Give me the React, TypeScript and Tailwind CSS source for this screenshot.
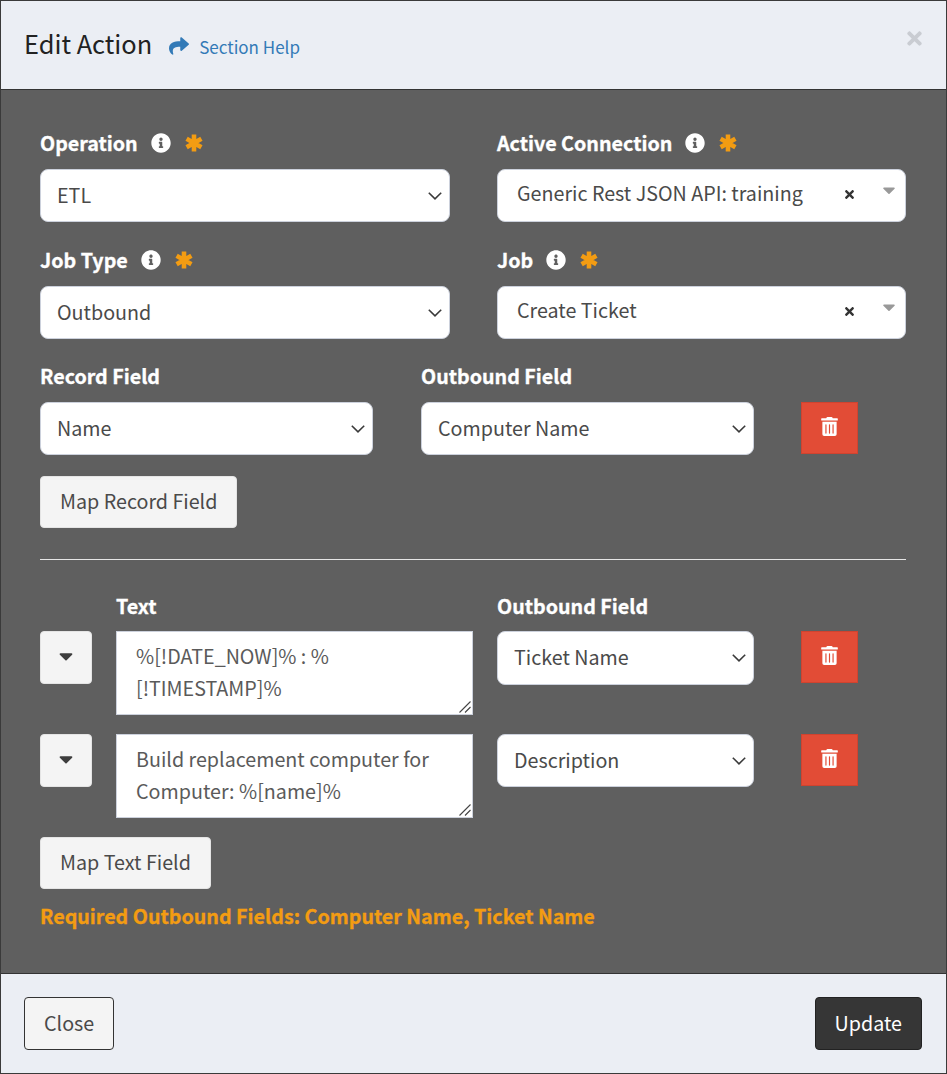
import React from 'react';
import { FaCaretDown, FaInfoCircle, FaShare, FaTimes, FaTrashAlt } from 'react-icons/fa';

function RequiredMark() {
  return (
    <svg viewBox="0 0 18 18" className="w-[18px] h-[18px] ml-[14px] text-[#f39c12]" stroke="currentColor" strokeWidth="4.6">
      <path d="M9 0.5V17.5M1.6 4.75L16.4 13.25M16.4 4.75L1.6 13.25" />
    </svg>
  );
}

function FieldLabel({ text, required }: { text: string; required?: boolean }) {
  return (
    <div className="flex items-center h-[31px] pb-[2px] mb-[10px] text-[19.7px] font-bold text-white [-webkit-text-stroke:0.3px]">
      <span>{text}</span>
      {required && (
        <>
          <FaInfoCircle className="ml-[13px] text-[20px]" />
          <RequiredMark />
        </>
      )}
    </div>
  );
}

function NativeSelect({ value, tall }: { value: string; tall?: boolean }) {
  return (
    <div className={tall ? 'relative h-[54px]' : 'relative h-[53px]'}>
      <select
        className="block w-full h-full pl-4 pr-8 pb-[2px] appearance-none bg-white border border-[#ccd1dc] rounded-lg text-[19.7px] text-[#4a4a4a] outline-none"
        defaultValue={value}
      >
        <option>{value}</option>
      </select>
      <svg
        viewBox="0 0 14 8"
        className="absolute right-[8px] top-[23px] w-[14px] h-[8px] text-[#3a3a3a] pointer-events-none"
        fill="none"
        stroke="currentColor"
        strokeWidth="1.6"
      >
        <path d="M0.8 0.8L7 6.8L13.2 0.8" />
      </svg>
    </div>
  );
}

function ClearableSelect({ value }: { value: string }) {
  return (
    <div className="flex items-start h-[53px] pl-[19px] pr-[6px] bg-white border border-[#ccd1dc] rounded-lg text-[19.7px] text-[#4a4a4a]">
      <span className="flex-1 leading-[46px]">{value}</span>
      <FaTimes className="mt-[18px] text-[13px] text-[#333]" />
      <FaCaretDown className="ml-[23px] mt-[10px] text-[20px] text-[#999]" />
    </div>
  );
}

function DeleteButton() {
  return (
    <button className="flex items-center justify-center w-[57px] h-[52px] bg-[#e24c36] border border-[#d0432f] text-white">
      <FaTrashAlt className="text-[19px] -mt-[3px]" />
    </button>
  );
}

function GrayButton({ text }: { text: string }) {
  return (
    <button className="block h-[52px] px-[19px] pb-[2px] bg-[#f4f4f4] border border-[#e4e4e4] rounded text-[19.7px] text-[#4a4a4a]">
      {text}
    </button>
  );
}

function TextMapRow({ text, field, tall }: { text: string; field: string; tall?: boolean }) {
  return (
    <div className="grid grid-cols-[52px_357px_257px_57px] gap-x-6 items-start">
      <button className="flex items-center justify-center h-[53px] bg-[#f4f4f4] border border-[#e4e4e4] rounded text-[#3d3d3d]">
        <FaCaretDown className="text-[22px] -mt-[3px]" />
      </button>
      <div className="relative">
        <textarea
          className="block w-[357px] h-[84px] pl-[19px] pr-4 pt-2 resize-none bg-white border border-[#ccd1dc] text-[19.7px] leading-[32px] text-[#5a5a5a] outline-none"
          defaultValue={text}
        />
        <svg
          viewBox="0 0 12 12"
          className="absolute right-[2px] bottom-[2px] w-[12px] h-[12px] text-[#444] pointer-events-none"
          stroke="currentColor"
          strokeWidth="1.1"
        >
          <path d="M0.5 11.5L11.5 0.5M6 11.5L11.5 6" />
        </svg>
      </div>
      <NativeSelect value={field} tall={tall} />
      <div className="ml-[23px]">
        <DeleteButton />
      </div>
    </div>
  );
}

export default function App() {
  return (
    <div
      className="flex flex-col h-[1074px] border border-[#3a3a3a] bg-[#5f5f5f]"
      style={{ fontFamily: '"Noto Sans CJK SC", "Noto Sans", sans-serif' }}
    >
      {/* Header */}
      <header className="flex items-start h-[89px] bg-[#ebeef4] border-b border-[#333] pl-[23px] pr-6">
        <h1 className="mt-[22px] text-[25.4px] leading-[40px] text-[#222]">Edit Action</h1>
        <a className="flex items-center ml-[17px] mt-[31px] text-[17px] leading-[30px] text-[#337ab7]">
          <FaShare className="text-[20px] mr-[10px] -mt-[3px]" />
          Section Help
        </a>
        <FaTimes className="ml-auto mt-[27px] -mr-[3px] text-[21px] text-[#c9ccd2]" />
      </header>

      {/* Body */}
      <main className="flex-1 pt-[38px] pl-[39px] pr-[40px]">
        <div className="grid grid-cols-[410px_409px] gap-x-[47px]">
          <div>
            <FieldLabel text="Operation" required />
            <NativeSelect value="ETL" />
          </div>
          <div>
            <FieldLabel text="Active Connection" required />
            <ClearableSelect value="Generic Rest JSON API: training" />
          </div>
        </div>

        <div className="grid grid-cols-[410px_409px] gap-x-[47px] mt-[23px]">
          <div>
            <FieldLabel text="Job Type" required />
            <NativeSelect value="Outbound" />
          </div>
          <div>
            <FieldLabel text="Job" required />
            <ClearableSelect value="Create Ticket" />
          </div>
        </div>

        <div className="grid grid-cols-[333px_333px_57px] gap-x-[48px] mt-[22px]">
          <div>
            <FieldLabel text="Record Field" />
            <NativeSelect value="Name" />
          </div>
          <div>
            <FieldLabel text="Outbound Field" />
            <NativeSelect value="Computer Name" />
          </div>
          <div className="pt-[41px] -ml-px">
            <DeleteButton />
          </div>
        </div>

        <div className="mt-[21px]">
          <GrayButton text="Map Record Field" />
        </div>

        <hr className="mt-[31px] border-t border-[#e6e6e6]" />

        <div className="grid grid-cols-[357px_257px] gap-x-6 ml-[76px] mt-[32px]">
          <div className="flex items-center h-[30px] pb-[2px] mb-[9px] text-[19.7px] font-bold text-white [-webkit-text-stroke:0.3px]">Text</div>
          <div className="flex items-center h-[30px] pb-[2px] mb-[9px] text-[19.7px] font-bold text-white [-webkit-text-stroke:0.3px]">Outbound Field</div>
        </div>

        <div className="flex flex-col gap-y-[19px]">
          <TextMapRow text="%[!DATE_NOW]% : %[!TIMESTAMP]%" field="Ticket Name" tall />
          <TextMapRow text="Build replacement computer for Computer: %[name]%" field="Description" />
        </div>

        <div className="mt-[19px]">
          <GrayButton text="Map Text Field" />
        </div>

        <p className="mt-[12px] text-[19.7px] leading-[30px] font-bold text-[#f39c12] [-webkit-text-stroke:0.3px]">
          Required Outbound Fields: Computer Name, Ticket Name
        </p>
      </main>

      {/* Footer */}
      <footer className="flex items-center justify-between h-[100px] bg-[#ebeef4] border-t border-[#333] pl-[23px] pr-[24px]">
        <button className="h-[53px] px-[19px] pb-[2px] bg-[#f4f4f4] border border-[#333] rounded text-[19.7px] text-[#4a4a4a]">
          Close
        </button>
        <button className="h-[53px] px-[19px] pb-[2px] bg-[#363636] border border-[#222] rounded text-[19.7px] text-white">
          Update
        </button>
      </footer>
    </div>
  );
}
